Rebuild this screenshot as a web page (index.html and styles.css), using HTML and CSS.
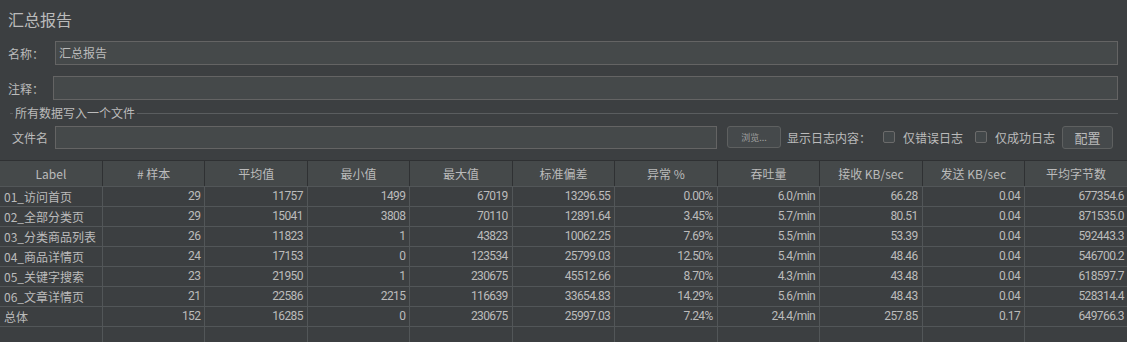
FILE: index.html
```html
<!DOCTYPE html>
<html lang="zh-CN">
<head>
<meta charset="utf-8">
<title>汇总报告</title>
<link rel="stylesheet" href="styles.css">
</head>
<body>
<div class="form">
  <div class="title">汇总报告</div>
  <div class="field-row">
    <span class="label label-name">名称：</span>
    <div class="input">汇总报告</div>
  </div>
  <div class="field-row row-comment">
    <span class="label label-comment">注释：</span>
    <div class="input"></div>
  </div>
  <div class="group">
    <div class="group-head"><span class="group-title">所有数据写入一个文件</span></div>
    <div class="file-row">
      <span class="file-label">文件名</span>
      <div class="input file-input"></div>
      <div class="btn btn-browse">浏览...</div>
      <span class="log-label">显示日志内容：</span>
      <span class="check"></span>
      <span class="check-text">仅错误日志</span>
      <span class="check check-2"></span>
      <span class="check-text">仅成功日志</span>
      <div class="btn btn-config">配置</div>
    </div>
  </div>
</div>
<table class="report">
  <thead>
    <tr><th>Label</th><th># 样本</th><th>平均值</th><th>最小值</th><th>最大值</th><th>标准偏差</th><th>异常 %</th><th>吞吐量</th><th>接收 KB/sec</th><th>发送 KB/sec</th><th>平均字节数</th></tr>
  </thead>
  <tbody>
    <tr><td class="name">01_访问首页</td><td>29</td><td>11757</td><td>1499</td><td>67019</td><td>13296.55</td><td>0.00%</td><td>6.0/min</td><td>66.28</td><td>0.04</td><td>677354.6</td></tr>
    <tr><td class="name">02_全部分类页</td><td>29</td><td>15041</td><td>3808</td><td>70110</td><td>12891.64</td><td>3.45%</td><td>5.7/min</td><td>80.51</td><td>0.04</td><td>871535.0</td></tr>
    <tr><td class="name">03_分类商品列表</td><td>26</td><td>11823</td><td>1</td><td>43823</td><td>10062.25</td><td>7.69%</td><td>5.5/min</td><td>53.39</td><td>0.04</td><td>592443.3</td></tr>
    <tr><td class="name">04_商品详情页</td><td>24</td><td>17153</td><td>0</td><td>123534</td><td>25799.03</td><td>12.50%</td><td>5.4/min</td><td>48.46</td><td>0.04</td><td>546700.2</td></tr>
    <tr><td class="name">05_关键字搜索</td><td>23</td><td>21950</td><td>1</td><td>230675</td><td>45512.66</td><td>8.70%</td><td>4.3/min</td><td>43.48</td><td>0.04</td><td>618597.7</td></tr>
    <tr><td class="name">06_文章详情页</td><td>21</td><td>22586</td><td>2215</td><td>116639</td><td>33654.83</td><td>14.29%</td><td>5.6/min</td><td>48.43</td><td>0.04</td><td>528314.4</td></tr>
    <tr><td class="name">总体</td><td>152</td><td>16285</td><td>0</td><td>230675</td><td>25997.03</td><td>7.24%</td><td>24.4/min</td><td>257.85</td><td>0.17</td><td>649766.3</td></tr>
    <tr><td class="name"></td><td></td><td></td><td></td><td></td><td></td><td></td><td></td><td></td><td></td><td></td></tr>
  </tbody>
</table>
</body>
</html>
```
FILE: styles.css
```css
html, body {
  margin: 0;
  padding: 0;
  background: #3c3f41;
  overflow: hidden;
}
body {
  width: 1127px;
  height: 342px;
  color: #bbbbbb;
  font-family: "Noto Sans CJK SC", "Noto Sans", sans-serif;
  font-size: 12px;
}
.form {
  padding: 0 9px 0 8px;
}
.title {
  padding-top: 9px;
  height: 20px;
  line-height: 20px;
  font-size: 16px;
  margin-bottom: 12px;
}
.field-row {
  display: flex;
  align-items: center;
  height: 24px;
}
.row-comment {
  margin-top: 11px;
}
.label {
  flex: none;
}
.label-name { width: 47px; }
.label-comment { width: 45px; }
.input {
  flex: 1;
  box-sizing: border-box;
  height: 24px;
  border: 1px solid #646464;
  background: #45494a;
  line-height: 22px;
  padding-left: 3px;
  color: #bbbbbb;
}
.group {
  margin: 5px 0 0 2px;
}
.group-head {
  display: flex;
  align-items: center;
  height: 16px;
}
.group-head::before {
  content: "";
  width: 3px;
  border-top: 1px solid #5a5d5f;
  margin-right: 2px;
}
.group-head::after {
  content: "";
  flex: 1;
  border-top: 1px solid #5a5d5f;
  margin-left: 2px;
}
.group-title {
  line-height: 16px;
}
.file-row {
  display: flex;
  align-items: center;
  height: 24px;
  margin-top: 4px;
  padding: 0 5px 0 2px;
}
.file-label {
  width: 43px;
  flex: none;
}
.file-input {
  height: 23px;
}
.btn {
  flex: none;
  box-sizing: border-box;
  border: 1px solid #5e6060;
  border-radius: 3px;
  background: #45494b;
  display: flex;
  align-items: center;
  justify-content: center;
}
.btn-browse {
  width: 54px;
  height: 22px;
  margin-left: 10px;
  font-size: 9px;
  color: #a0a0a0;
}
.log-label {
  margin-left: 6px;
  flex: none;
}
.check {
  flex: none;
  width: 12px;
  height: 12px;
  box-sizing: border-box;
  border: 1px solid #6b6b6b;
  border-radius: 2px;
  background: #43484a;
  margin-left: 12px;
}
.check-2 {
  margin-left: 12px;
}
.check-text {
  margin-left: 8px;
  flex: none;
}
.btn-config {
  width: 51px;
  height: 23px;
  margin-left: 7px;
  font-size: 13px;
  color: #bbbbbb;
}
.report {
  margin-top: 11px;
  width: 1127px;
  table-layout: fixed;
  border-collapse: collapse;
  border-spacing: 0;
}
.report th {
  height: 25px;
  background: #45494a;
  font-weight: normal;
  color: #bbbbbb;
  border-top: 1px solid #2f3133;
  border-right: 1px solid #2f3133;
  border-bottom: 1px solid #525658;
  padding: 0;
  font-size: 12px;
  text-align: center;
  vertical-align: middle;
}
.report th:last-child {
  border-right: none;
}
.report td {
  height: 19px;
  padding: 0 4px 0 0;
  border-right: 1px solid #525658;
  border-bottom: 1px solid #525658;
  text-align: right;
  font-family: "Roboto", "Noto Sans CJK SC", sans-serif;
  letter-spacing: -0.6px;
  white-space: nowrap;
  overflow: hidden;
  line-height: 19px;
}
.report td:last-child {
  border-right: none;
  padding-right: 3px;
}
.report td.name {
  text-align: left;
  padding: 0 0 0 4px;
  letter-spacing: 0;
  font-family: "Noto Sans CJK SC", sans-serif;
}
```
